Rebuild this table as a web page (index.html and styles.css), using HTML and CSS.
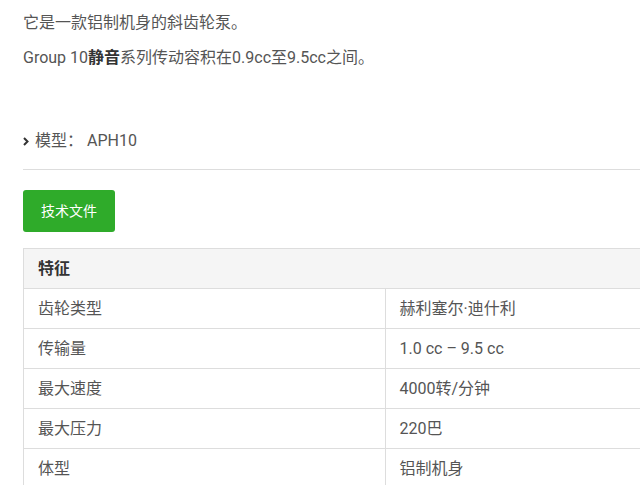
FILE: index.html
```html
<!DOCTYPE html>
<html lang="zh-CN">
<head>
<meta charset="utf-8">
<title>APH10</title>
<link rel="stylesheet" href="styles.css">
</head>
<body>
<div class="page">
  <p class="intro">它是一款铝制机身的斜齿轮泵。</p>
  <p class="intro">Group 10<strong>静音</strong>系列传动容积在0.9cc至9.5cc之间。</p>
  <div class="model">
    <svg class="chev" width="6" height="9" viewBox="0 0 6 9"><path d="M1 1 L4.5 4.5 L1 8" fill="none" stroke="#333" stroke-width="2"/></svg>
    <span>模型：&nbsp;APH10</span>
  </div>
  <a class="btn" href="#">技术文件</a>
  <table class="spec">
    <thead>
      <tr><th colspan="2">特征</th></tr>
    </thead>
    <tbody>
      <tr><td>齿轮类型</td><td>赫利塞尔·迪什利</td></tr>
      <tr><td>传输量</td><td>1.0 cc – 9.5 cc</td></tr>
      <tr><td>最大速度</td><td>4000转/分钟</td></tr>
      <tr><td>最大压力</td><td>220巴</td></tr>
      <tr><td>体型</td><td>铝制机身</td></tr>
    </tbody>
  </table>
</div>
</body>
</html>
```
FILE: styles.css
```css
html, body {
  margin: 0;
  padding: 0;
  overflow: hidden;
  background: #fff;
}
body {
  font-family: Roboto, "Noto Sans CJK SC", sans-serif;
  font-size: 16px;
  color: #555;
}
.page {
  width: 724px;
  padding: 11px 0 0 23px;
}
.intro {
  margin: 0 0 11px;
  line-height: 24px;
}
.intro strong {
  font-weight: 700;
  color: #333;
}
.model {
  margin-top: 59px;
  line-height: 24px;
  padding-bottom: 16px;
  border-bottom: 1px solid #ddd;
  display: flex;
  align-items: center;
  gap: 6px;
}
.chev {
  display: block;
}
.btn {
  display: inline-block;
  margin-top: 20px;
  background: #2fab2a;
  color: #fff;
  text-decoration: none;
  font-size: 14px;
  line-height: 42px;
  height: 42px;
  padding: 0 18px;
  border-radius: 3px;
}
.spec {
  margin-top: 16px;
  width: 724px;
  border-collapse: collapse;
  table-layout: fixed;
}
.spec th, .spec td {
  border: 1px solid #ddd;
  height: 39px;
  padding: 0 14px;
  text-align: left;
  line-height: 24px;
}
.spec th {
  background: #f5f5f5;
  color: #333;
  font-weight: 700;
}
.spec td {
  width: 50%;
}
```
